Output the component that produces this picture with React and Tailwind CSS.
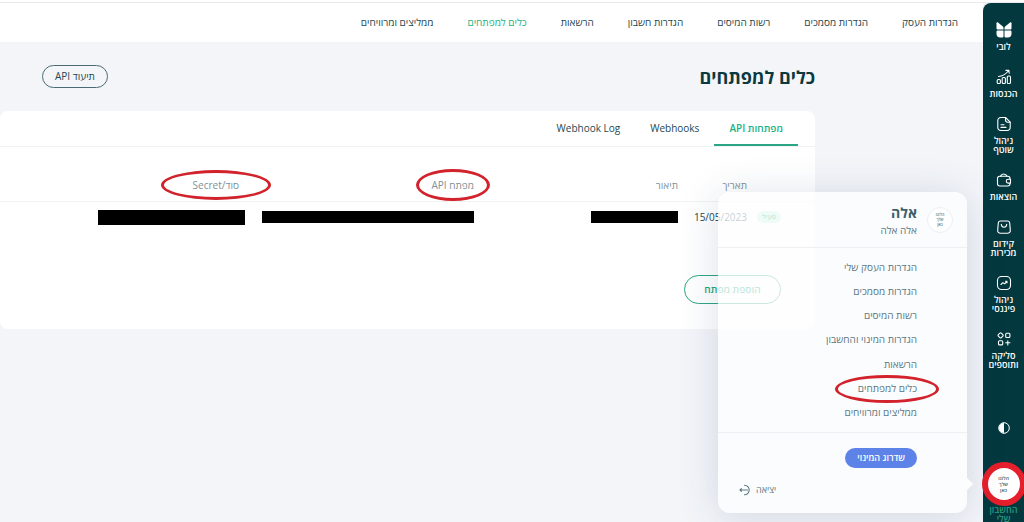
import React from "react";

const stroke = {
  fill: "none",
  stroke: "currentColor",
  strokeWidth: 1.1,
  strokeLinecap: "round",
  strokeLinejoin: "round",
};

function LobbyIcon() {
  return (
    <svg viewBox="0 0 16 16" className="size-4" fill="currentColor" aria-hidden="true">
      <path d="M.5 1.200C.5.300 1.300.100 2 .600l4.600 3.600c.6.500.9 1 .9 1.800v1.500H1.800C1 7.500.5 7 .5 6.200z" />
      <path d="M15.500 1.200c0-.900-.800-1.100-1.500-.600L9.400 4.200c-.6.500-.9 1-.9 1.800v1.500h5.700c.8 0 1.300-.5 1.300-1.300z" />
      <path d="M.5 9.800C.5 9 1 8.500 1.800 8.500h5.700v5.700c0 .8-.5 1.300-1.300 1.300H4C2 15.500.5 14 .5 12z" />
      <path d="M15.500 9.800c0-.8-.5-1.300-1.300-1.300H8.500v5.700c0 .8.500 1.300 1.300 1.300H12c2 0 3.500-1.500 3.500-3.500z" />
    </svg>
  );
}

function IncomeIcon() {
  return (
    <svg viewBox="0 0 16 16" className="size-4" {...stroke} aria-hidden="true">
      <rect x="1.200" y="10.500" width="3.200" height="4" rx="1" />
      <rect x="6.200" y="8.500" width="3.200" height="6" rx="1" />
      <rect x="11.300" y="7" width="3.200" height="7.500" rx="1" />
      <path d="M2.500 7.500C6 7.300 9.500 5.500 12.800 1.500M9.900 1.400l3-.200.300 3" />
    </svg>
  );
}

function DocumentIcon() {
  return (
    <svg viewBox="0 0 16 16" className="size-4" {...stroke} aria-hidden="true">
      <path d="M9.500 1.500H5c-2 0-3.200 1-3.200 3.200v6.600c0 2.200 1.200 3.200 3.200 3.200h6c2 0 3.200-1 3.200-3.200V6.200z" />
      <path d="M9.500 1.500V4c0 1.500.7 2.200 2.200 2.200h2.500M5 8.700h3M5 11.400h5" />
    </svg>
  );
}

function WalletIcon() {
  return (
    <svg viewBox="0 0 16 16" className="size-4" {...stroke} aria-hidden="true">
      <path d="M14 7V6.500c0-1.400-.8-2.200-2.200-2.200H3.700c-1.400 0-2.200.8-2.200 2.200v5.300c0 1.400.8 2.200 2.200 2.200h8.100c1.400 0 2.200-.8 2.200-2.200v-.500" />
      <path d="M14.500 7.300h-2.300a1.900 1.900 0 0 0 0 3.800h2.300zM4.500 4.200C5 2.800 6 2 7.500 2S10.500 2.800 11 4.200" />
    </svg>
  );
}

function BagIcon() {
  return (
    <svg viewBox="0 0 16 16" className="size-4" {...stroke} aria-hidden="true">
      <path d="M4.500 2h7c1.300 0 2 .6 2.200 1.900l.6 7.300c.2 1.900-.9 3-2.800 3h-7c-1.900 0-3-1.100-2.800-3l.6-7.300C2.500 2.600 3.200 2 4.500 2z" />
      <path d="M5.300 5.300c0 1.700 1.100 2.900 2.700 2.900s2.700-1.200 2.700-2.900" />
    </svg>
  );
}

function FinanceIcon() {
  return (
    <svg viewBox="0 0 16 16" className="size-4" {...stroke} aria-hidden="true">
      <rect x="1.500" y="1.500" width="13" height="13" rx="4" />
      <path d="M5 9.500 6.900 7.700l1.800 1.100 2.300-2.400M9.500 6.200H11v1.500" />
    </svg>
  );
}

function AddonsIcon() {
  return (
    <svg viewBox="0 0 16 16" className="size-4" {...stroke} aria-hidden="true">
      <rect x="2.500" y="2.300" width="4.200" height="4.200" rx="1" transform="rotate(45 4.600 4.400)" />
      <rect x="9.700" y="2.300" width="4.200" height="4.200" rx="1" />
      <rect x="2.500" y="9.700" width="4.200" height="4.200" rx="1" />
      <path d="M11.800 9.700v4.200M9.700 11.800h4.200" />
    </svg>
  );
}

const sideItems = [
  { Icon: LobbyIcon, lines: ["לובי"] },
  { Icon: IncomeIcon, lines: ["הכנסות"] },
  { Icon: DocumentIcon, lines: ["ניהול", "שוטף"] },
  { Icon: WalletIcon, lines: ["הוצאות"] },
  { Icon: BagIcon, lines: ["קידום", "מכירות"] },
  { Icon: FinanceIcon, lines: ["ניהול", "פיננסי"] },
  { Icon: AddonsIcon, lines: ["סליקה", "ותוספים"] },
];

const navItems = [
  "הגדרות העסק",
  "הגדרות מסמכים",
  "רשות המיסים",
  "הגדרות חשבון",
  "הרשאות",
  "כלים למפתחים",
  "ממליצים ומרוויחים",
];

const menuItems = [
  "הגדרות העסק שלי",
  "הגדרות מסמכים",
  "רשות המיסים",
  "הגדרות המינוי והחשבון",
  "הרשאות",
  "כלים למפתחים",
  "ממליצים ומרוויחים",
];

const tabs = ["מפתחות API", "Webhooks", "Webhook Log"];

function Lines({ lines }) {
  return lines.map((line) => (
    <span key={line} className="block whitespace-nowrap">
      {line}
    </span>
  ));
}

function Ring({ className }) {
  return (
    <span
      aria-hidden="true"
      className={`pointer-events-none absolute top-1/2 left-1/2 -translate-x-1/2 -translate-y-1/2 rounded-[50%] border-[3px] border-[#d2222c] ${className}`}
    />
  );
}

function Sidebar() {
  return (
    <aside className="mt-[3px] flex w-[41px] shrink-0 flex-col items-center rounded-tl-lg bg-[#04383f] pt-[19px] text-[9px] leading-[9px] font-semibold text-white">
      <nav className="flex flex-col gap-[18px]">
        {sideItems.map(({ Icon, lines }) => (
          <a key={lines.join(" ")} href="#" className="flex flex-col items-center gap-1 text-center">
            <Icon />
            <span>
              <Lines lines={lines} />
            </span>
          </a>
        ))}
      </nav>
      <button type="button" aria-label="ניגודיות" className="mt-auto mb-[33px]">
        <svg viewBox="0 0 12 12" className="size-3" aria-hidden="true">
          <circle cx="6" cy="6" r="5.300" fill="none" stroke="white" />
          <path d="M6 1a5 5 0 0 0 0 10z" fill="white" />
        </svg>
      </button>
      <a href="#" className="flex h-[55px] flex-col items-center gap-1 text-center text-[#2a9a7c]">
        <span className="relative flex size-[34px] shrink-0 flex-col items-center justify-center rounded-full bg-white text-[5px] leading-[6px] text-[#35606a]">
          <Lines lines={["הלוגו", "שלך", "כאן"]} />
          <span className="pointer-events-none absolute -inset-[5px] rounded-full border-[6px] border-[#e51f2b]" />
        </span>
        <span>
          <Lines lines={["החשבון", "שלי"]} />
        </span>
      </a>
    </aside>
  );
}

function AccountMenu() {
  return (
    <section
      aria-label="החשבון שלי"
      className="absolute top-[192px] right-[57px] w-[249px] rounded-xl bg-[#fdfdff]/75 text-[10px] font-medium text-[#5b7880] shadow-[0_4px_40px_rgba(40,60,100,0.16)]"
    >
      <header className="flex h-[56px] items-center gap-[10px] border-b border-[#eef0f4] pr-[14px]">
        <span className="flex size-[26px] flex-col items-center justify-center rounded-full border border-[#eceff2] bg-white text-[4px] leading-[5px] font-semibold">
          <Lines lines={["הלוגו", "שלך", "כאן"]} />
        </span>
        <div className="pt-0.5">
          <p className="text-sm leading-[18px] font-bold text-[#3d616a]">אלה</p>
          <p className="leading-4">אלה אלה</p>
        </div>
      </header>
      <ul className="grid h-[185px] auto-rows-fr border-b border-[#eef0f4] py-[7px] pr-[50px]">
        {menuItems.map((item) => (
          <li key={item} className="flex items-center">
            <a href="#" className="relative whitespace-nowrap">
              {item}
              {item === "כלים למפתחים" && <Ring className="h-7 w-[104px]" />}
            </a>
          </li>
        ))}
      </ul>
      <div className="pt-[15px] pr-[50px]">
        <button type="button" className="h-5 rounded-full bg-[#5d83e8] px-3 text-[9px] font-semibold text-white">
          שדרוג המינוי
        </button>
      </div>
      <div className="flex justify-end pt-[14px] pb-[15px] pl-[21px]">
        <a href="#" className="flex items-center gap-[5px] text-[9px] leading-4">
          יציאה
          <svg viewBox="0 0 12 12" className="size-3" {...stroke} aria-hidden="true">
            <path d="M5.500 1.300a4.700 4.700 0 1 1 0 9.400M8.500 6H1M2.400 4.700 1 6l1.400 1.300" />
          </svg>
        </a>
      </div>
      <svg viewBox="0 0 6 12" className="absolute bottom-[23px] left-full h-3 w-[6px]" fill="#fdfdff" aria-hidden="true">
        <path d="M0 0l5.500 5.300q.6.700 0 1.400L0 12z" />
      </svg>
    </section>
  );
}

function KeysTable() {
  return (
    <table className="w-full table-fixed border-collapse text-right text-[10px] text-[#24474f]">
      <colgroup>
        <col className="w-[68px]" />
        <col className="w-[69px]" />
        <col className="w-[204px]" />
        <col className="w-[229px]" />
        <col />
      </colgroup>
      <thead>
        <tr className="h-[54px] border-b border-[#f0f2f4] text-[#80919a]">
          <td />
          <th scope="col" className="pt-6 font-normal">תאריך</th>
          <th scope="col" className="pt-6 font-normal">תיאור</th>
          <th scope="col" className="pt-6 font-normal">
            <span className="relative whitespace-nowrap">
              מפתח API
              <Ring className="h-8 w-[74px]" />
            </span>
          </th>
          <th scope="col" className="pt-6 pr-[6px] font-normal">
            <span className="relative whitespace-nowrap">
              סוד/Secret
              <Ring className="h-[30px] w-[110px]" />
            </span>
          </th>
        </tr>
      </thead>
      <tbody>
        <tr className="h-8">
          <td className="pr-[34px]">
            <span className="block w-6 rounded-md bg-[#c4f3e0] text-center text-[7px] leading-3 font-semibold text-[#14a877]">פעיל</span>
          </td>
          <td>15/05/2023</td>
          <td><span className="block h-3 w-[87px] bg-black" /></td>
          <td><span className="block h-3 w-[212px] bg-black" /></td>
          <td><span className="block h-[15px] w-[147px] bg-black" /></td>
        </tr>
      </tbody>
    </table>
  );
}

export default function App() {
  return (
    <div
      dir="rtl"
      className="relative flex min-h-screen overflow-hidden bg-[#f3f5f9] font-['Open_Sans','Liberation_Sans',sans-serif] text-[#24474f]"
    >
      <div className="absolute inset-x-0 top-0 h-[3px] border-b border-[#e8eaec] bg-white" />
      <Sidebar />
      <div className="min-w-0 flex-1">
        <nav className="mt-[3px] flex h-[39px] items-center gap-[34px] bg-white pr-[25px] text-[10px] font-medium">
          {navItems.map((item) => (
            <a
              key={item}
              href="#"
              className={item === "כלים למפתחים" ? "whitespace-nowrap text-[#20b285]" : "whitespace-nowrap"}
            >
              {item}
            </a>
          ))}
        </nav>
        <main>
          <div className="flex h-[69px] items-center justify-between pr-[168px] pl-[42px]">
            <h1 className="text-lg font-bold text-[#0c3840]">כלים למפתחים</h1>
            <button type="button" className="h-[23px] rounded-full border border-[#4b6b74] px-3 text-[10px] font-medium text-[#24474f]">
              תיעוד API
            </button>
          </div>
          <section className="mr-[168px] rounded-lg bg-white pb-[25px]">
            <div role="tablist" className="flex h-9 border-b border-[#f0f2f4] pr-[17px] text-[10px] font-medium">
              {tabs.map((tab, i) => (
                <button
                  key={tab}
                  type="button"
                  role="tab"
                  aria-selected={i === 0}
                  className={
                    i === 0
                      ? "border-b-2 border-[#2ba685] px-[15px] pt-0.5 font-semibold text-[#20b285]"
                      : "border-b-2 border-transparent px-[15px] pt-0.5"
                  }
                >
                  {tab}
                </button>
              ))}
            </div>
            <KeysTable />
            <button type="button" className="mt-[42px] mr-[34px] h-[29px] w-[97px] rounded-full border border-[#2ba685] text-[10px] font-semibold text-[#1fa67c]">
              הוספת מפתח
            </button>
          </section>
        </main>
      </div>
      <AccountMenu />
    </div>
  );
}
